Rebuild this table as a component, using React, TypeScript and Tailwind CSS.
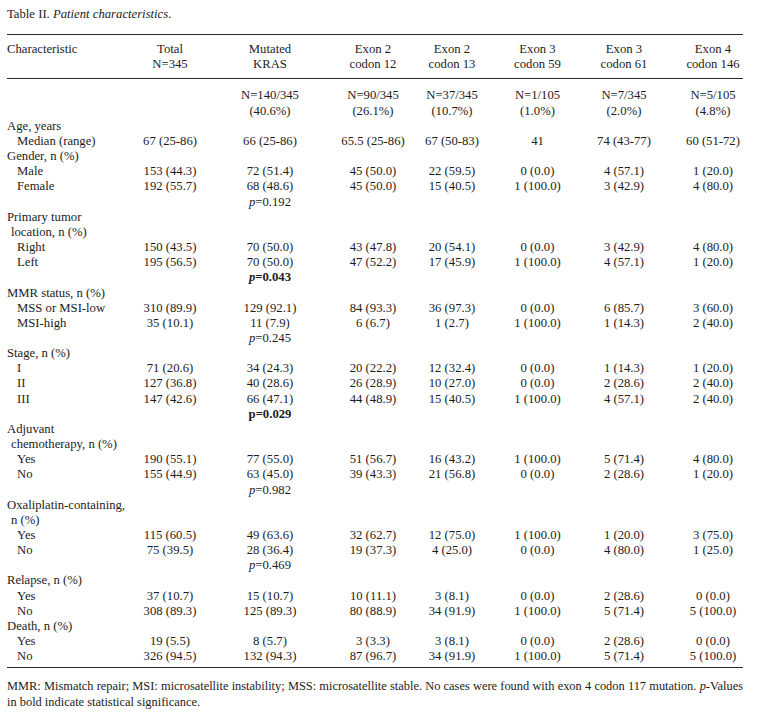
import React from "react";

type Cell = string | { t: string; bold?: boolean; italicP?: boolean };

type Row = {
  label: string;
  indent?: 0 | 1 | 2;
  cells?: Cell[];
};

const P = (v: string, bold = false, italicP = true): Cell => ({ t: v, bold, italicP });

const rows: Row[] = [
  { label: "", cells: ["", "N=140/345", "N=90/345", "N=37/345", "N=1/105", "N=7/345", "N=5/105"] },
  { label: "", cells: ["", "(40.6%)", "(26.1%)", "(10.7%)", "(1.0%)", "(2.0%)", "(4.8%)"] },
  { label: "Age, years" },
  { label: "Median (range)", indent: 1, cells: ["67 (25-86)", "66 (25-86)", "65.5 (25-86)", "67 (50-83)", "41", "74 (43-77)", "60 (51-72)"] },
  { label: "Gender, n (%)" },
  { label: "Male", indent: 1, cells: ["153 (44.3)", "72 (51.4)", "45 (50.0)", "22 (59.5)", "0 (0.0)", "4 (57.1)", "1 (20.0)"] },
  { label: "Female", indent: 1, cells: ["192 (55.7)", "68 (48.6)", "45 (50.0)", "15 (40.5)", "1 (100.0)", "3 (42.9)", "4 (80.0)"] },
  { label: "", cells: ["", P("=0.192")] },
  { label: "Primary tumor" },
  { label: "location, n (%)", indent: 2 },
  { label: "Right", indent: 1, cells: ["150 (43.5)", "70 (50.0)", "43 (47.8)", "20 (54.1)", "0 (0.0)", "3 (42.9)", "4 (80.0)"] },
  { label: "Left", indent: 1, cells: ["195 (56.5)", "70 (50.0)", "47 (52.2)", "17 (45.9)", "1 (100.0)", "4 (57.1)", "1 (20.0)"] },
  { label: "", cells: ["", P("=0.043", true)] },
  { label: "MMR status, n (%)" },
  { label: "MSS or MSI-low", indent: 1, cells: ["310 (89.9)", "129 (92.1)", "84 (93.3)", "36 (97.3)", "0 (0.0)", "6 (85.7)", "3 (60.0)"] },
  { label: "MSI-high", indent: 1, cells: ["35 (10.1)", "11 (7.9)", "6 (6.7)", "1 (2.7)", "1 (100.0)", "1 (14.3)", "2 (40.0)"] },
  { label: "", cells: ["", P("=0.245")] },
  { label: "Stage, n (%)" },
  { label: "I", indent: 1, cells: ["71 (20.6)", "34 (24.3)", "20 (22.2)", "12 (32.4)", "0 (0.0)", "1 (14.3)", "1 (20.0)"] },
  { label: "II", indent: 1, cells: ["127 (36.8)", "40 (28.6)", "26 (28.9)", "10 (27.0)", "0 (0.0)", "2 (28.6)", "2 (40.0)"] },
  { label: "III", indent: 1, cells: ["147 (42.6)", "66 (47.1)", "44 (48.9)", "15 (40.5)", "1 (100.0)", "4 (57.1)", "2 (40.0)"] },
  { label: "", cells: ["", P("=0.029", true, false)] },
  { label: "Adjuvant" },
  { label: "chemotherapy, n (%)", indent: 2 },
  { label: "Yes", indent: 1, cells: ["190 (55.1)", "77 (55.0)", "51 (56.7)", "16 (43.2)", "1 (100.0)", "5 (71.4)", "4 (80.0)"] },
  { label: "No", indent: 1, cells: ["155 (44.9)", "63 (45.0)", "39 (43.3)", "21 (56.8)", "0 (0.0)", "2 (28.6)", "1 (20.0)"] },
  { label: "", cells: ["", P("=0.982")] },
  { label: "Oxaliplatin-containing," },
  { label: "n (%)", indent: 2 },
  { label: "Yes", indent: 1, cells: ["115 (60.5)", "49 (63.6)", "32 (62.7)", "12 (75.0)", "1 (100.0)", "1 (20.0)", "3 (75.0)"] },
  { label: "No", indent: 1, cells: ["75 (39.5)", "28 (36.4)", "19 (37.3)", "4 (25.0)", "0 (0.0)", "4 (80.0)", "1 (25.0)"] },
  { label: "", cells: ["", P("=0.469")] },
  { label: "Relapse, n (%)" },
  { label: "Yes", indent: 1, cells: ["37 (10.7)", "15 (10.7)", "10 (11.1)", "3 (8.1)", "0 (0.0)", "2 (28.6)", "0 (0.0)"] },
  { label: "No", indent: 1, cells: ["308 (89.3)", "125 (89.3)", "80 (88.9)", "34 (91.9)", "1 (100.0)", "5 (71.4)", "5 (100.0)"] },
  { label: "Death, n (%)" },
  { label: "Yes", indent: 1, cells: ["19 (5.5)", "8 (5.7)", "3 (3.3)", "3 (8.1)", "0 (0.0)", "2 (28.6)", "0 (0.0)"] },
  { label: "No", indent: 1, cells: ["326 (94.5)", "132 (94.3)", "87 (96.7)", "34 (91.9)", "1 (100.0)", "5 (71.4)", "5 (100.0)"] },
];

const GRID = "grid grid-cols-[145px_36px_164px_42px_116px_55px_118px_60px]";

function CellView({ c }: { c: Cell }) {
  if (typeof c === "string") return <span>{c}</span>;
  return (
    <span className={c.bold ? "font-bold" : ""}>
      <span className={c.italicP ? "italic" : ""}>p</span>
      {c.t}
    </span>
  );
}

function DataRow({ row }: { row: Row }) {
  const indentCls =
    row.indent === 1 ? "pl-[10px]" : row.indent === 2 ? "pl-[4px]" : "";
  const cells = row.cells ?? [];
  return (
    <div className={GRID}>
      <div className={`whitespace-nowrap ${indentCls}`}>{row.label || "\u00a0"}</div>
      {Array.from({ length: 7 }).map((_, i) => (
        <div key={i} className="flex justify-center whitespace-nowrap">
          {cells[i] !== undefined && cells[i] !== "" ? <CellView c={cells[i]} /> : null}
        </div>
      ))}
    </div>
  );
}

const headers: [string, string][] = [
  ["Total", "N=345"],
  ["Mutated", "KRAS"],
  ["Exon 2", "codon 12"],
  ["Exon 2", "codon 13"],
  ["Exon 3", "codon 59"],
  ["Exon 3", "codon 61"],
  ["Exon 4", "codon 146"],
];

export default function App() {
  return (
    <div className="min-h-[719px] w-[759px] bg-white text-[#1c1c1c] font-['Liberation_Serif','Times_New_Roman',serif] text-[12.7px] leading-[15.15px]">
      <div className="w-[736px] ml-[7px] pt-[7px]">
        <div className="whitespace-nowrap">
          Table II. <span className="italic">Patient characteristics</span>.
        </div>
        <div className="mt-[12px] border-t border-[#2a2a2a]" />
        <div className={`${GRID} pt-[7px] pb-[6px]`}>
          <div className="whitespace-nowrap">Characteristic</div>
          {headers.map(([a, b], i) => (
            <div key={i} className="flex flex-col items-center whitespace-nowrap">
              <span>{a}</span>
              <span>{b}</span>
            </div>
          ))}
        </div>
        <div className="border-t border-[#2a2a2a]" />
        <div className="pt-[9px] pb-[3px]">
          {rows.map((r, i) => (
            <DataRow key={i} row={r} />
          ))}
        </div>
        <div className="border-t border-[#2a2a2a]" />
        <div className="pt-[11px] text-[12.4px]">
          <div className="text-justify [text-align-last:justify]">
            MMR: Mismatch repair; MSI: microsatellite instability; MSS: microsatellite stable. No cases were found with exon 4 codon 117 mutation. <span className="italic">p</span>-Values
          </div>
          <div className="whitespace-nowrap">in bold indicate statistical significance.</div>
        </div>
      </div>
    </div>
  );
}
